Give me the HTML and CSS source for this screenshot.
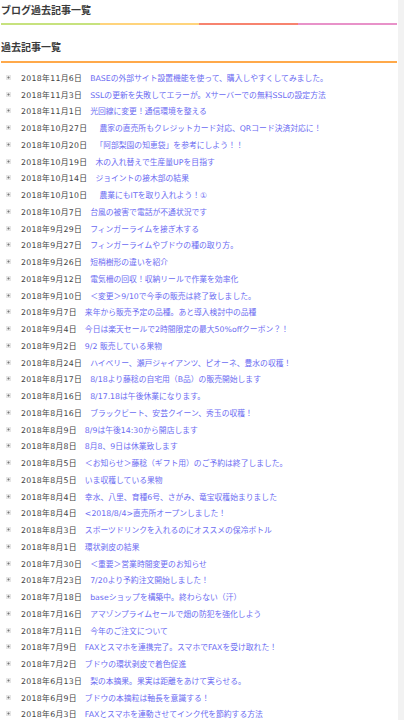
FILE: index.html
```html
<!DOCTYPE html>
<html lang="ja">
<head>
<meta charset="utf-8">
<link rel="stylesheet" href="styles.css">
</head>
<body>
<div class="page">
  <main class="main">
    <h1 class="page-title">ブログ過去記事一覧</h1>
    <div class="rainbow"><span class="c1"></span><span class="c2"></span><span class="c3"></span><span class="c4"></span></div>
    <h2 class="sec-title">過去記事一覧</h2>
    <ul class="posts">
      <li><span class="date">2018年11月6日</span><a class="t">BASEの外部サイト設置機能を使って、購入しやすくしてみました。</a></li>
      <li><span class="date">2018年11月3日</span><a class="t">SSLの更新を失敗してエラーが。Xサーバーでの無料SSLの設定方法</a></li>
      <li><span class="date">2018年11月1日</span><a class="t">光回線に変更！通信環境を整える</a></li>
      <li><span class="date">2018年10月27日</span><a class="t sp">農家の直売所もクレジットカード対応、QRコード決済対応に！</a></li>
      <li><span class="date">2018年10月20日</span><a class="t">「阿部梨園の知恵袋」を参考にしよう！！</a></li>
      <li><span class="date">2018年10月19日</span><a class="t">木の入れ替えで生産量UPを目指す</a></li>
      <li><span class="date">2018年10月14日</span><a class="t">ジョイントの接木部の結果</a></li>
      <li><span class="date">2018年10月10日</span><a class="t sp">農業にもITを取り入れよう！①</a></li>
      <li><span class="date">2018年10月7日</span><a class="t">台風の被害で電話が不通状況です</a></li>
      <li><span class="date">2018年9月29日</span><a class="t">フィンガーライムを接ぎ木する</a></li>
      <li><span class="date">2018年9月27日</span><a class="t">フィンガーライムやブドウの種の取り方。</a></li>
      <li><span class="date">2018年9月26日</span><a class="t">短梢樹形の違いを紹介</a></li>
      <li><span class="date">2018年9月12日</span><a class="t">電気柵の回収！収納リールで作業を効率化</a></li>
      <li><span class="date">2018年9月10日</span><a class="t">＜変更＞9/10で今季の販売は終了致しました。</a></li>
      <li><span class="date">2018年9月7日</span><a class="t">来年から販売予定の品種。あと導入検討中の品種</a></li>
      <li><span class="date">2018年9月4日</span><a class="t">今日は楽天セールで2時間限定の最大50%offクーポン？！</a></li>
      <li><span class="date">2018年9月2日</span><a class="t">9/2 販売している果物</a></li>
      <li><span class="date">2018年8月24日</span><a class="t">ハイベリー、瀬戸ジャイアンツ、ピオーネ、豊水の収穫！</a></li>
      <li><span class="date">2018年8月17日</span><a class="t">8/18より藤稔の自宅用（B品）の販売開始します</a></li>
      <li><span class="date">2018年8月16日</span><a class="t">8/17.18は午後休業になります。</a></li>
      <li><span class="date">2018年8月16日</span><a class="t">ブラックビート、安芸クイーン、秀玉の収穫！</a></li>
      <li><span class="date">2018年8月9日</span><a class="t">8/9は午後14:30から開店します</a></li>
      <li><span class="date">2018年8月8日</span><a class="t">8月8、9日は休業致します</a></li>
      <li><span class="date">2018年8月5日</span><a class="t">＜お知らせ＞藤稔（ギフト用）のご予約は終了しました。</a></li>
      <li><span class="date">2018年8月5日</span><a class="t">いま収穫している果物</a></li>
      <li><span class="date">2018年8月4日</span><a class="t">幸水、八里、育種6号、さがみ、竜宝収穫始まりました</a></li>
      <li><span class="date">2018年8月4日</span><a class="t">&lt;2018/8/4&gt;直売所オープンしました！</a></li>
      <li><span class="date">2018年8月3日</span><a class="t">スポーツドリンクを入れるのにオススメの保冷ボトル</a></li>
      <li><span class="date">2018年8月1日</span><a class="t">環状剥皮の結果</a></li>
      <li><span class="date">2018年7月30日</span><a class="t">＜重要＞営業時間変更のお知らせ</a></li>
      <li><span class="date">2018年7月23日</span><a class="t">7/20より予約注文開始しました！</a></li>
      <li><span class="date">2018年7月18日</span><a class="t">baseショップを構築中。終わらない（汗）</a></li>
      <li><span class="date">2018年7月16日</span><a class="t">アマゾンプライムセールで畑の防犯を強化しよう</a></li>
      <li><span class="date">2018年7月11日</span><a class="t">今年のご注文について</a></li>
      <li><span class="date">2018年7月9日</span><a class="t">FAXとスマホを連携完了。スマホでFAXを受け取れた！</a></li>
      <li><span class="date">2018年7月2日</span><a class="t">ブドウの環状剥皮で着色促進</a></li>
      <li><span class="date">2018年6月13日</span><a class="t">梨の本摘果。果実は距離をあけて実らせる。</a></li>
      <li><span class="date">2018年6月9日</span><a class="t">ブドウの本摘粒は軸長を意識する！</a></li>
      <li><span class="date">2018年6月3日</span><a class="t">FAXとスマホを連動させてインク代を節約する方法</a></li>
    </ul>
  </main>
  <div class="edge"></div>
</div>
</body>
</html>
```

FILE: styles.css
```css
html, body {
  margin: 0;
  padding: 0;
  background: #ffffff;
}

body {
  font-family: "DejaVu Sans", "Noto Sans CJK JP", sans-serif;
  color: #444444;
}

.page {
  display: flex;
  width: 404px;
  min-height: 720px;
}

.main {
  width: 398px;
  padding: 0 1px;
  box-sizing: border-box;
}

.edge {
  flex: 1;
  background: #f2f2f2;
}

.page-title {
  margin: 0;
  padding-top: 3px;
  height: 20px;
  font-family: "Noto Sans CJK JP", sans-serif;
  font-size: 10px;
  line-height: 14px;
  font-weight: bold;
  color: #3a3a3a;
}

.rainbow {
  display: flex;
  height: 2px;
}

.rainbow span {
  flex: 1;
}

.rainbow .c1 { background: #c7e27e; }
.rainbow .c2 { background: #ffd47c; }
.rainbow .c3 { background: #f7836f; }
.rainbow .c4 { background: #e892c9; }

.sec-title {
  margin: 0;
  padding-top: 15px;
  height: 21px;
  font-family: "Noto Sans CJK JP", sans-serif;
  font-size: 10px;
  line-height: 14px;
  font-weight: bold;
  color: #3a3a3a;
  border-bottom: 2px solid #ffa94a;
}

.posts {
  list-style: none;
  margin: 0;
  padding: 6px 0 0 0;
}

.posts li {
  display: flex;
  align-items: center;
  height: 16.76px;
  font-size: 7.8px;
  white-space: nowrap;
}

.posts li::before {
  content: "";
  width: 5px;
  height: 5px;
  margin: 0 10px 0 5px;
  flex: none;
  background: radial-gradient(circle, #777 0 0.8px, #e6e6e6 1.2px);
}

.date {
  color: #444444;
  letter-spacing: 0.3px;
}

.t {
  margin-left: 8px;
  color: #6b6bf2;
}

.t.sp {
  margin-left: 12px;
}
```
